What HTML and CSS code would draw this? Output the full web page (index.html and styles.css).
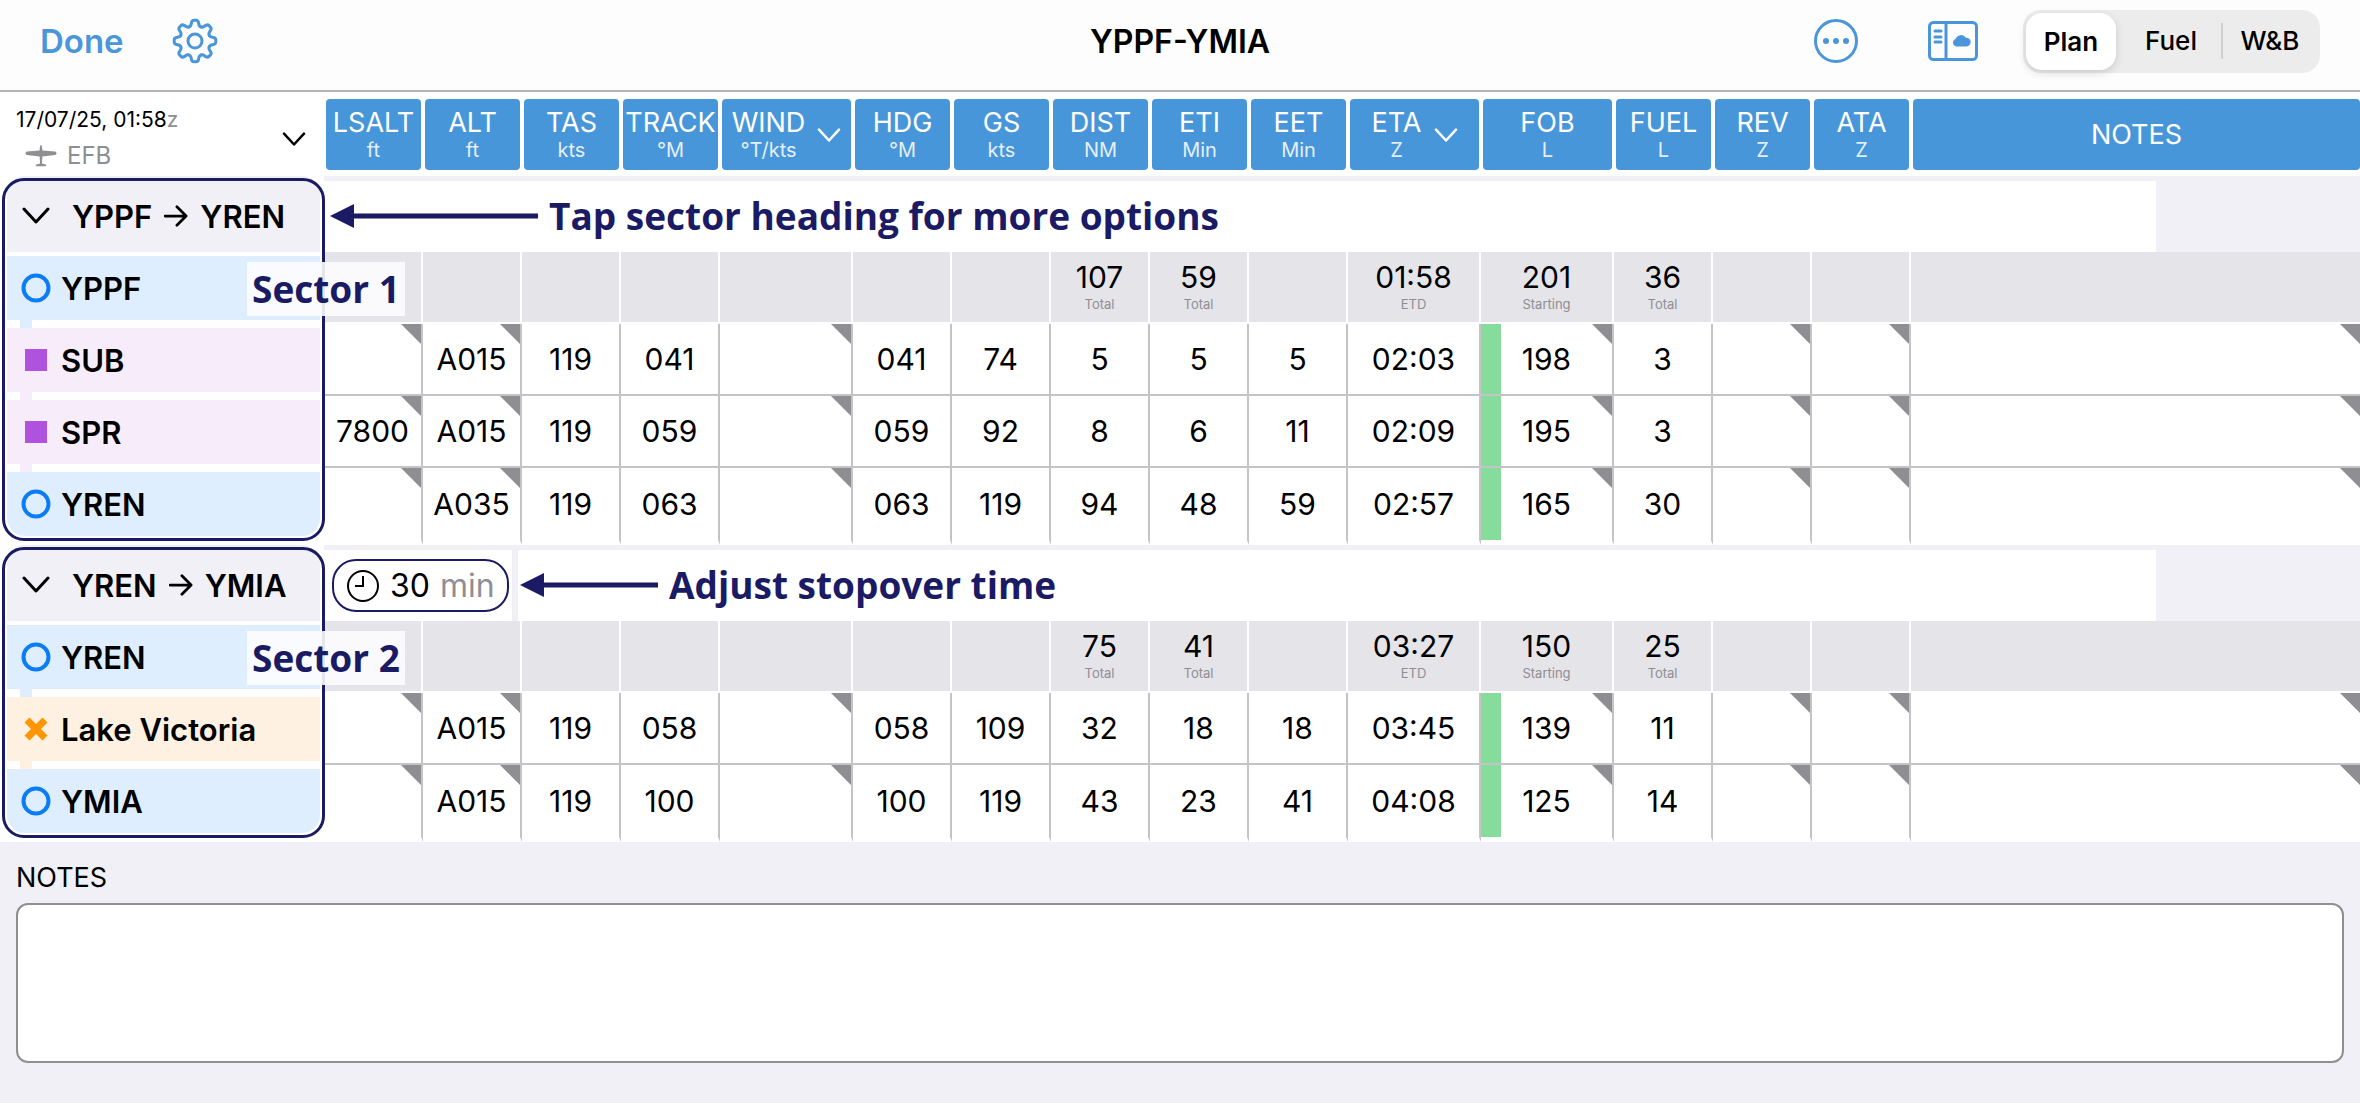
FILE: index.html
```html
<!DOCTYPE html>
<html lang="en">
<head>
    <meta charset="UTF-8">
    <meta name="viewport" content="width=device-width, initial-scale=1.0">
    <title>YPPF-YMIA</title>
    <link rel="stylesheet" href="styles.css">
</head>
<body>
    <!-- shared icons -->
    <svg class="sprite" aria-hidden="true">
        <symbol id="chevron" viewBox="0 0 28 18"><path d="M2 2l12 13L26 2"/></symbol>
        <symbol id="arrow" viewBox="0 0 26 24"><path d="M1 12h23M14 2l10 10-10 10"/></symbol>
        <symbol id="airport" viewBox="0 0 30 30"><circle cx="15" cy="15" r="12.5"/></symbol>
        <symbol id="navaid" viewBox="0 0 30 30"><rect x="4" y="4" width="22" height="22"/></symbol>
        <symbol id="place" viewBox="0 0 30 30"><path d="M6 6l18 18M24 6L6 24"/></symbol>
        <path id="tooth" d="M17.1 8.9Q19 8.2 19.3 5.5Q19.7 2.2 22 2.2H24Q26.3 2.2 26.7 5.5Q27 8.2 28.9 8.9"/>
    </svg>

    <header class="toolbar">
        <div class="toolbar-left">
            <button class="done">Done</button>
            <button class="icon-button" aria-label="Settings">
                <svg class="icon" width="46" height="46" viewBox="0 0 46 46">
                    <use href="#tooth"/>
                    <use href="#tooth" transform="rotate(45 23 23)"/>
                    <use href="#tooth" transform="rotate(90 23 23)"/>
                    <use href="#tooth" transform="rotate(135 23 23)"/>
                    <use href="#tooth" transform="rotate(180 23 23)"/>
                    <use href="#tooth" transform="rotate(225 23 23)"/>
                    <use href="#tooth" transform="rotate(270 23 23)"/>
                    <use href="#tooth" transform="rotate(315 23 23)"/>
                    <circle cx="23" cy="23" r="7"/>
                </svg>
            </button>
        </div>
        <h1>YPPF-YMIA</h1>
        <div class="toolbar-right">
            <button class="icon-button" aria-label="More">
                <svg class="icon" width="44" height="44" viewBox="0 0 44 44">
                    <circle cx="22" cy="22" r="20.5"/>
                    <g class="solid"><circle cx="12" cy="22" r="3"/><circle cx="22" cy="22" r="3"/><circle cx="32" cy="22" r="3"/></g>
                </svg>
            </button>
            <button class="icon-button" aria-label="Weather panel">
                <svg class="icon" width="50" height="40" viewBox="0 0 50 40">
                    <rect x="1.5" y="1.5" width="47" height="37" rx="4"/>
                    <path d="M18 2v36M7 10h6M7 16h6M7 21h6"/>
                    <path class="solid" d="M28 25.5a4 4 0 0 1-.5-7.6 6 6 0 0 1 10.5-1.2 4.4 4.4 0 0 1 .5 8.8z"/>
                </svg>
            </button>
            <div class="segmented" role="radiogroup" aria-label="View">
                <input type="radio" name="view" id="view-plan" checked><label for="view-plan">Plan</label>
                <input type="radio" name="view" id="view-fuel"><label for="view-fuel">Fuel</label>
                <input type="radio" name="view" id="view-wb"><label for="view-wb">W&amp;B</label>
            </div>
        </div>
    </header>

    <main>
        <table class="log">
            <colgroup>
                <col class="col-name">
                <col><col><col><col>
                <col class="col-wide">
                <col><col><col><col><col>
                <col class="col-wide"><col class="col-wide">
                <col><col><col>
                <col class="col-notes">
            </colgroup>
            <thead>
                <tr>
                    <th>
                        <button class="flight">
                            <span class="flight-info">
                                <span class="flight-date">17/07/25, 01:58<small>z</small></span>
                                <span class="flight-craft">
                                    <svg width="32" height="22" viewBox="0 0 32 22"><path d="M16 0c.8 0 1.2 2 1.4 5.5L30 6.500c2 .3 2 3.2 0 3.5l-12.6 1.5-.5 7 3.6 1c1 .4 1 1.6 0 1.8h-9c-1-.2-1-1.4 0-1.8l3.6-1-.5-7L2 10c-2-.3-2-3.2 0-3.5l12.6-1C14.8 2 15.2 0 16 0z"/></svg>
                                    EFB
                                </span>
                            </span>
                            <svg class="chevron small"><use href="#chevron"/></svg>
                        </button>
                    </th>
                    <th><button class="col-head"><span>LSALT<small>ft</small></span></button></th>
                    <th><button class="col-head"><span>ALT<small>ft</small></span></button></th>
                    <th><button class="col-head"><span>TAS<small>kts</small></span></button></th>
                    <th><button class="col-head"><span>TRACK<small>°M</small></span></button></th>
                    <th><button class="col-head"><span>WIND<small>°T/kts</small></span><svg class="chevron small"><use href="#chevron"/></svg></button></th>
                    <th><button class="col-head"><span>HDG<small>°M</small></span></button></th>
                    <th><button class="col-head"><span>GS<small>kts</small></span></button></th>
                    <th><button class="col-head"><span>DIST<small>NM</small></span></button></th>
                    <th><button class="col-head"><span>ETI<small>Min</small></span></button></th>
                    <th><button class="col-head"><span>EET<small>Min</small></span></button></th>
                    <th><button class="col-head"><span>ETA<small>Z</small></span><svg class="chevron small"><use href="#chevron"/></svg></button></th>
                    <th><button class="col-head"><span>FOB<small>L</small></span></button></th>
                    <th><button class="col-head"><span>FUEL<small>L</small></span></button></th>
                    <th><button class="col-head"><span>REV<small>Z</small></span></button></th>
                    <th><button class="col-head"><span>ATA<small>Z</small></span></button></th>
                    <th><button class="col-head"><span>NOTES</span></button></th>
                </tr>
            </thead>

            <tbody class="sector">
                <tr class="sector-row">
                    <th scope="rowgroup">
                        <button class="sector-head">
                            <svg class="chevron"><use href="#chevron"/></svg>
                            <span>YPPF</span><svg class="arrow"><use href="#arrow"/></svg><span>YREN</span>
                        </button>
                    </th>
                    <td colspan="16">
                        <div class="sector-bar">
                            <div class="hint">
                                <svg width="208" height="24" viewBox="0 0 208 24"><path d="M0 12L24 0v24zM23 9.5h185v5H23z"/></svg>
                                <span>Tap sector heading for more options</span>
                            </div>
                        </div>
                    </td>
                </tr>
                <tr class="summary">
                    <th scope="row"><div class="point airport"><svg><use href="#airport"/></svg>YPPF</div><span class="tag">Sector 1</span></th>
                    <td></td><td></td><td></td><td></td><td></td><td></td><td></td>
                    <td>107<small>Total</small></td>
                    <td>59<small>Total</small></td>
                    <td></td>
                    <td>01:58<small>ETD</small></td>
                    <td>201<small>Starting</small></td>
                    <td>36<small>Total</small></td>
                    <td></td><td></td><td></td>
                </tr>
                <tr>
                    <th scope="row"><div class="point navaid"><svg><use href="#navaid"/></svg>SUB</div></th>
                    <td class="edit"></td><td class="edit">A015</td><td>119</td><td>041</td><td class="edit"></td>
                    <td>041</td><td>74</td><td>5</td><td>5</td><td>5</td><td>02:03</td>
                    <td class="edit fob">198</td><td>3</td><td class="edit"></td><td class="edit"></td><td class="edit"></td>
                </tr>
                <tr>
                    <th scope="row"><div class="point navaid"><svg><use href="#navaid"/></svg>SPR</div></th>
                    <td class="edit">7800</td><td class="edit">A015</td><td>119</td><td>059</td><td class="edit"></td>
                    <td>059</td><td>92</td><td>8</td><td>6</td><td>11</td><td>02:09</td>
                    <td class="edit fob">195</td><td>3</td><td class="edit"></td><td class="edit"></td><td class="edit"></td>
                </tr>
                <tr>
                    <th scope="row"><div class="point airport"><svg><use href="#airport"/></svg>YREN</div></th>
                    <td class="edit"></td><td class="edit">A035</td><td>119</td><td>063</td><td class="edit"></td>
                    <td>063</td><td>119</td><td>94</td><td>48</td><td>59</td><td>02:57</td>
                    <td class="edit fob">165</td><td>30</td><td class="edit"></td><td class="edit"></td><td class="edit"></td>
                </tr>
            </tbody>

            <tbody class="sector">
                <tr class="sector-row">
                    <th scope="rowgroup">
                        <button class="sector-head">
                            <svg class="chevron"><use href="#chevron"/></svg>
                            <span>YREN</span><svg class="arrow"><use href="#arrow"/></svg><span>YMIA</span>
                        </button>
                    </th>
                    <td colspan="16">
                        <div class="sector-bar">
                            <div class="stopover-cell">
                                <button class="stopover">
                                    <svg width="34" height="34" viewBox="0 0 34 34"><circle cx="17" cy="17" r="15"/><path d="M17 7v10H9"/></svg>
                                    30 <span>min</span>
                                </button>
                            </div>
                            <div class="hint after-stopover">
                                <svg width="138" height="24" viewBox="0 0 138 24"><path d="M0 12L24 0v24zM23 9.5h115v5H23z"/></svg>
                                <span>Adjust stopover time</span>
                            </div>
                        </div>
                    </td>
                </tr>
                <tr class="summary">
                    <th scope="row"><div class="point airport"><svg><use href="#airport"/></svg>YREN</div><span class="tag">Sector 2</span></th>
                    <td></td><td></td><td></td><td></td><td></td><td></td><td></td>
                    <td>75<small>Total</small></td>
                    <td>41<small>Total</small></td>
                    <td></td>
                    <td>03:27<small>ETD</small></td>
                    <td>150<small>Starting</small></td>
                    <td>25<small>Total</small></td>
                    <td></td><td></td><td></td>
                </tr>
                <tr>
                    <th scope="row"><div class="point place"><svg><use href="#place"/></svg>Lake Victoria</div></th>
                    <td class="edit"></td><td class="edit">A015</td><td>119</td><td>058</td><td class="edit"></td>
                    <td>058</td><td>109</td><td>32</td><td>18</td><td>18</td><td>03:45</td>
                    <td class="edit fob">139</td><td>11</td><td class="edit"></td><td class="edit"></td><td class="edit"></td>
                </tr>
                <tr>
                    <th scope="row"><div class="point airport"><svg><use href="#airport"/></svg>YMIA</div></th>
                    <td class="edit"></td><td class="edit">A015</td><td>119</td><td>100</td><td class="edit"></td>
                    <td>100</td><td>119</td><td>43</td><td>23</td><td>41</td><td>04:08</td>
                    <td class="edit fob">125</td><td>14</td><td class="edit"></td><td class="edit"></td><td class="edit"></td>
                </tr>
            </tbody>
        </table>

        <section class="notes">
            <label for="notes">NOTES</label>
            <textarea id="notes"></textarea>
        </section>
    </main>
</body>
</html>
```
FILE: styles.css
```css
*,
*::after {
    box-sizing: border-box;
}
body {
    font-family: Inter, "Liberation Sans", sans-serif;
    margin: 0;
    background-color: #f1f0f6;
    color: #000;
}
button {
    font: inherit;
    color: inherit;
    background: none;
    border: 0;
    margin: 0;
    padding: 0;
    cursor: pointer;
}
svg {
    flex: none;
}
.sprite {
    position: absolute;
    width: 0;
    height: 0;
}

/* toolbar */
.toolbar {
    display: grid;
    grid-template-columns: 1fr auto 1fr;
    align-items: center;
    height: 92px;
    padding: 0 40px 8px;
    background: #fdfdfd;
    border-bottom: 2px solid #b4b4b6;
}
.toolbar h1 {
    margin: 0;
    font-size: 32px;
    font-weight: 600;
}
.toolbar-left,
.toolbar-right {
    display: flex;
    align-items: center;
}
.toolbar-left {
    gap: 48px;
}
.toolbar-right {
    justify-content: flex-end;
}
.done {
    font-size: 33px;
    font-weight: 600;
    color: #4a96d9;
}
.icon-button {
    display: flex;
}
.toolbar-right .icon-button {
    margin-right: 70px;
}
.toolbar-right .icon-button + .icon-button {
    margin-right: 45px;
}
.icon {
    fill: none;
    stroke: #4a96d9;
    stroke-width: 3;
    stroke-linecap: round;
    stroke-linejoin: round;
}
.icon .solid {
    fill: #4a96d9;
    stroke: none;
}
.segmented {
    display: flex;
    align-items: center;
    height: 63px;
    padding: 3px;
    border-radius: 18px;
    background: #ececed;
    font-size: 26px;
    font-weight: 500;
}
.segmented input {
    position: absolute;
    opacity: 0;
}
.segmented label {
    width: 100px;
    line-height: 36px;
    text-align: center;
}
.segmented label:last-of-type {
    width: 96px;
    border-left: 2px solid #d0d0d3;
}
.segmented input:checked + label {
    width: 90px;
    margin-right: 5px;
    line-height: 57px;
    border-radius: 16px;
    background: #fff;
    font-weight: 600;
    box-shadow: 0 3px 8px rgba(0, 0, 0, 0.14);
}

/* chevrons and arrows */
.chevron,
.arrow {
    fill: none;
    stroke: currentColor;
    stroke-width: 3;
    stroke-linecap: round;
    stroke-linejoin: round;
}
.chevron {
    width: 28px;
    height: 18px;
}
.chevron.small {
    width: 24px;
    height: 15px;
}
.arrow {
    width: 24px;
    height: 22px;
}

/* flight log */
.log {
    width: 100%;
    table-layout: fixed;
    border-spacing: 0;
    background: #fff;
    font-size: 30px;
}
.log col {
    width: 99px;
}
.log .col-name {
    width: 324px;
}
.log .col-wide {
    width: 133px;
}
.log .col-notes {
    width: auto;
}
.log th,
.log td {
    padding: 0;
    font-weight: 400;
}
.log thead th {
    height: 84px;
    padding: 0 2px;
}
.log thead th:last-child {
    padding-right: 0;
}
.flight {
    display: flex;
    align-items: center;
    justify-content: space-between;
    width: 100%;
    padding: 10px 16px 0 14px;
    text-align: left;
}
.flight-date {
    display: block;
    font-size: 21px;
    line-height: 34px;
}
.flight-date small {
    font-size: 21px;
    color: #8e8e93;
}
.flight-craft {
    display: flex;
    align-items: center;
    gap: 10px;
    padding-left: 9px;
    font-size: 24px;
    line-height: 38px;
    color: #8e8e93;
    fill: #8e8e93;
}
.col-head {
    display: flex;
    align-items: center;
    justify-content: center;
    gap: 12px;
    width: 100%;
    height: 71px;
    padding-top: 2px;
    border-radius: 4px;
    background: #4896da;
    color: #fff;
    font-size: 27px;
    line-height: 30px;
}
.col-head small {
    display: block;
    font-size: 20px;
    line-height: 24px;
    opacity: 0.85;
}

/* sectors */
.sector {
    position: relative;
}
.sector::after {
    content: "";
    position: absolute;
    top: 2px;
    bottom: 4px;
    left: 2px;
    width: 323px;
    border: 3px solid #1b1a64;
    border-radius: 22px;
    pointer-events: none;
}
.sector td {
    height: 72px;
    border-right: 2px solid #c4c4c6;
    border-bottom: 2px solid #c4c4c6;
    text-align: center;
}
.sector td:last-child {
    border-right: 0;
}
.sector th {
    position: relative;
    padding: 0 4px 0 7px;
}
.sector .sector-row td {
    border: 0;
    background: #f1f0f6;
}
.sector-head {
    display: flex;
    align-items: center;
    gap: 12px;
    width: 100%;
    height: 76px;
    padding: 4px 0 0 15px;
    border-radius: 18px 18px 0 0;
    background: #f1f0f6;
    font-size: 31px;
    font-weight: 600;
}
.sector-head .chevron {
    margin-right: 10px;
}
.sector-bar {
    display: flex;
    gap: 6px;
    height: 71px;
    margin: 5px 10% 0 0;
}
.hint,
.stopover-cell {
    display: flex;
    align-items: center;
    background: #fff;
}
.hint {
    flex: 1;
    gap: 11px;
    padding: 0 0 2px 6px;
    color: #1b1a64;
    fill: #1b1a64;
}
.hint,
.tag {
    font-family: "Open Sans", "Noto Sans", sans-serif;
    font-size: 37px;
    font-weight: 700;
}
.hint.after-stopover {
    padding-left: 2px;
}
.stopover-cell {
    width: 188px;
    padding-left: 8px;
}
.stopover {
    display: flex;
    align-items: center;
    gap: 10px;
    height: 53px;
    padding: 0 12px;
    border: 2px solid #1b1a64;
    border-radius: 24px;
    font-size: 32px;
}
.stopover svg {
    fill: none;
    stroke: #000;
    stroke-width: 2;
}
.stopover span {
    color: #8e8e93;
}
.sector .summary td {
    padding-top: 2px;
    border-color: #fff;
    background: #e5e4e9;
    line-height: 32px;
}
.summary small {
    display: block;
    font-size: 13px;
    line-height: 22px;
    color: #8e8e93;
}
.sector .edit {
    background: linear-gradient(to bottom left, #8e8e93 48%, transparent 52%) top right / 20px 20px no-repeat;
}
.sector .fob {
    background:
        linear-gradient(to bottom left, #8e8e93 48%, transparent 52%) top right / 20px 20px no-repeat,
        linear-gradient(#86dd9b, #86dd9b) top left / 20px 100% no-repeat;
}
.sector tr:last-child td {
    height: 77px;
    border-bottom: 5px solid #fff;
}
.sector tr:last-child th {
    padding-bottom: 5px;
}
.sector tr:last-child .point {
    border-radius: 0 0 18px 18px;
}

/* waypoint names */
.point {
    position: relative;
    display: flex;
    align-items: center;
    gap: 10px;
    height: 64px;
    padding-left: 14px;
    font-size: 31px;
    font-weight: 600;
}
.point svg {
    width: 30px;
    height: 30px;
}
.airport {
    background: #dfeefe;
    fill: none;
    stroke: #0a7cf5;
    stroke-width: 4;
}
.navaid {
    background: #f7edfa;
    fill: #af52de;
}
.place {
    background: #fef1e1;
    stroke: #ff9500;
    stroke-width: 7;
}
/* track line joining one waypoint to the next */
.sector tr:not(:last-child) .point::after {
    content: "";
    position: absolute;
    top: 100%;
    left: 13px;
    width: 12px;
    height: 8px;
    background: inherit;
}
.tag {
    position: absolute;
    z-index: 1;
    top: 10px;
    left: 247px;
    padding: 0 5px;
    background: rgba(252, 252, 255, 0.9);
    color: #1b1a64;
    line-height: 54px;
    white-space: nowrap;
}

/* notes */
.notes {
    padding: 20px 16px 40px;
}
.notes label {
    display: block;
    font-size: 27px;
    line-height: 32px;
}
.notes textarea {
    display: block;
    width: 100%;
    height: 160px;
    margin-top: 9px;
    padding: 12px;
    border: 2px solid #8e8e93;
    border-radius: 12px;
    background: #fff;
    font: inherit;
    font-size: 26px;
    resize: none;
}
```
